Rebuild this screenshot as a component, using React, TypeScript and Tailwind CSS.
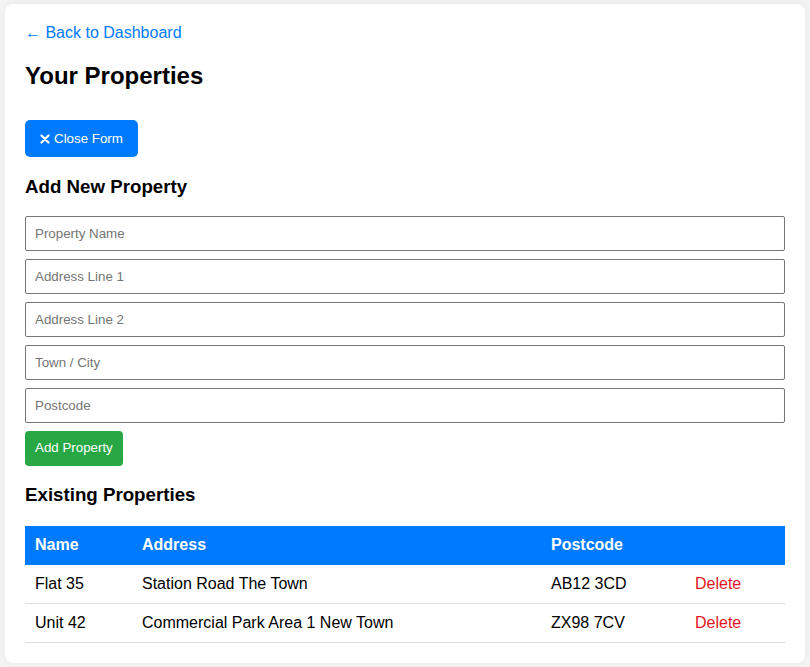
import React from "react";

const rows = [
  { name: "Flat 35", address: "Station Road The Town", postcode: "AB12 3CD" },
  { name: "Unit 42", address: "Commercial Park Area 1 New Town", postcode: "ZX98 7CV" },
];

const fields = ["Property Name", "Address Line 1", "Address Line 2", "Town / City", "Postcode"];

export default function App() {
  return (
    <div
      className="min-h-[667px] bg-[#f4f4f4] pt-[4px] pb-[5px] pl-[5px] pr-[5px]"
      style={{ fontFamily: '"Liberation Sans", Arial, sans-serif' }}
    >
      <div className="bg-white rounded-[8px] shadow-[0_0_10px_rgba(0,0,0,0.06)] p-[20px]">
        <a href="#" className="block text-[16px] leading-[18.4px] text-[#007bff]">
          ← Back to Dashboard
        </a>
        <h2 className="mt-[20px] mb-[30px] text-[24px] leading-[27.6px] font-bold text-black">
          Your Properties
        </h2>
        <button className="flex items-center h-[37px] px-[15px] bg-[#007bff] text-white text-[13.333px] rounded-[5px]">
          <svg width="10" height="10" viewBox="0 0 10 10" className="mr-[4px]">
            <path d="M1.5 1.5 L8.5 8.5 M8.5 1.5 L1.5 8.5" stroke="white" strokeWidth="2.2" strokeLinecap="round" />
          </svg>
          Close Form
        </button>
        <h3 className="mt-[18.5px] mb-[18.5px] text-[18.72px] leading-[21.5px] font-bold text-black">
          Add New Property
        </h3>
        <div className="flex flex-col gap-[8px]">
          {fields.map((f) => (
            <input
              key={f}
              placeholder={f}
              className="block w-full h-[35px] px-[9px] border border-[#767676] rounded-[2px] text-[13.333px] text-black placeholder:text-[#757575] bg-white"
            />
          ))}
        </div>
        <button className="mt-[8px] h-[35px] px-[10px] bg-[#28a745] text-white text-[13.333px] rounded-[4px]">
          Add Property
        </button>
        <h3 className="mt-[18px] mb-[20.5px] text-[18.72px] leading-[21.5px] font-bold text-black">
          Existing Properties
        </h3>
        <table className="w-full border-collapse text-[16px] leading-[18.4px] text-black">
          <thead>
            <tr className="bg-[#007bff] text-white h-[39px]">
              <th className="w-[107px] px-[10px] text-left font-bold">Name</th>
              <th className="w-[409px] px-[10px] text-left font-bold">Address</th>
              <th className="w-[144px] px-[10px] text-left font-bold">Postcode</th>
              <th className="px-[10px] text-left font-bold"></th>
            </tr>
          </thead>
          <tbody>
            {rows.map((r) => (
              <tr key={r.name} className="border-b border-[#dddddd] h-[39px]">
                <td className="px-[10px]">{r.name}</td>
                <td className="px-[10px]">{r.address}</td>
                <td className="px-[10px]">{r.postcode}</td>
                <td className="px-[10px]">
                  <button className="text-[16px] leading-[18.4px] text-[#e3161f]">Delete</button>
                </td>
              </tr>
            ))}
          </tbody>
        </table>
      </div>
    </div>
  );
}
